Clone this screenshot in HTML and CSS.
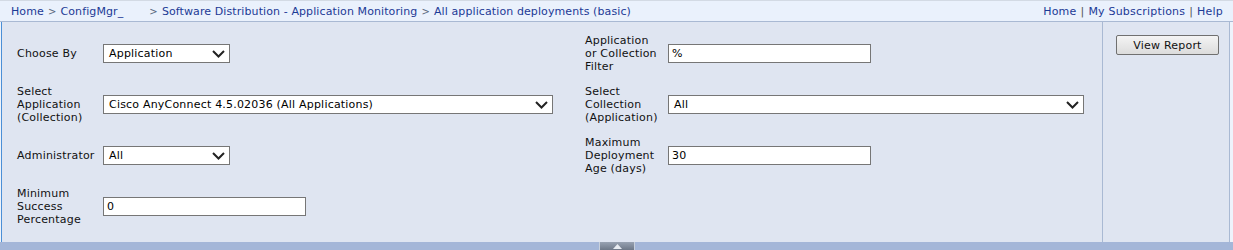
FILE: index.html
```html
<!DOCTYPE html>
<html lang="en">
<head>
    <meta charset="UTF-8">
    <title>All application deployments (basic)</title>
    <link rel="stylesheet" href="styles.css">
</head>
<body>
    <div class="header">
        <div class="crumbs">
            <a href="#">Home</a><span class="sep">&gt;</span><a href="#">ConfigMgr_</a><span class="gap"></span><span class="sep">&gt;</span><a href="#">Software Distribution - Application Monitoring</a><span class="sep">&gt;</span><a href="#">All application deployments (basic)</a>
        </div>
        <div class="links">
            <a href="#">Home</a><span class="bar">|</span><a href="#">My Subscriptions</a><span class="bar">|</span><a href="#">Help</a>
        </div>
    </div>
    <div class="main">
        <div class="form">
            <div class="label">Choose By</div>
            <div class="ctrl">
                <div class="select w-s"><span>Application</span><svg class="chev" width="13" height="8" viewBox="0 0 13 8"><path d="M1 1l5.5 5.5L12 1" fill="none" stroke="#222" stroke-width="2"/></svg></div>
            </div>
            <div class="label">Application<br>or Collection<br>Filter</div>
            <div class="ctrl"><div class="input w-m">%</div></div>

            <div class="label">Select<br>Application<br>(Collection)</div>
            <div class="ctrl">
                <div class="select w-l"><span>Cisco AnyConnect 4.5.02036 (All Applications)</span><svg class="chev" width="13" height="8" viewBox="0 0 13 8"><path d="M1 1l5.5 5.5L12 1" fill="none" stroke="#222" stroke-width="2"/></svg></div>
            </div>
            <div class="label">Select<br>Collection<br>(Application)</div>
            <div class="ctrl">
                <div class="select w-xl"><span>All</span><svg class="chev" width="13" height="8" viewBox="0 0 13 8"><path d="M1 1l5.5 5.5L12 1" fill="none" stroke="#222" stroke-width="2"/></svg></div>
            </div>

            <div class="label">Administrator</div>
            <div class="ctrl">
                <div class="select w-s"><span>All</span><svg class="chev" width="13" height="8" viewBox="0 0 13 8"><path d="M1 1l5.5 5.5L12 1" fill="none" stroke="#222" stroke-width="2"/></svg></div>
            </div>
            <div class="label">Maximum<br>Deployment<br>Age (days)</div>
            <div class="ctrl"><div class="input w-m">30</div></div>

            <div class="label">Minimum<br>Success<br>Percentage</div>
            <div class="ctrl"><div class="input w-m">0</div></div>
        </div>
        <div class="side">
            <button class="btn">View Report</button>
        </div>
    </div>
    <div class="footer">
        <div class="tab"><svg width="9" height="5" viewBox="0 0 9 5"><path d="M0 5L4.5 0L9 5Z" fill="#e8ecf2"/></svg></div>
    </div>
</body>
</html>
```

FILE: styles.css
```css
body {
    margin: 0;
    font-family: "DejaVu Sans", Verdana, sans-serif;
    font-size: 11px;
    letter-spacing: 0.2px;
    color: #000;
    background: #eef3fb;
}
a {
    color: #1c3a96;
    text-decoration: none;
}
.header {
    height: 20px;
    display: flex;
    justify-content: space-between;
    align-items: center;
    padding: 0 10px 0 11px;
    background: #eaf1fc;
    border-top: 1px solid #d3dae4;
    border-bottom: 1px solid #a9b9d3;
}
.crumbs a {
    letter-spacing: 0.1px;
}
.sep {
    color: #5a6a80;
    font-size: 10px;
    margin: 0 4px;
}
.gap {
    display: inline-block;
    width: 22px;
}
.bar {
    color: #555;
    margin: 0 4px;
}
.main {
    display: flex;
    height: 220px;
    background: #dfe5f1;
    border-left: 1px solid #4b8fd6;
    border-right: 1px solid #a9b9d3;
    margin: 0 3px 0 1px;
}
.form {
    flex: 1;
    display: grid;
    grid-template-columns: 86px 482px 83px 1fr;
    grid-auto-rows: 51px;
    align-items: center;
    padding: 6px 0 0 15px;
}
.label {
    line-height: 13px;
    color: #111;
    white-space: nowrap;
}
.ctrl {
    display: flex;
    align-items: center;
}
.select, .input {
    box-sizing: border-box;
    height: 19px;
    background: #fff;
    border: 1px solid #767676;
    display: flex;
    align-items: center;
    padding: 0 4px 0 5px;
    color: #000;
}
.select {
    justify-content: space-between;
}
.input {
    padding-left: 3px;
}
.chev {
    flex: none;
    margin-top: 1px;
}
.w-s { width: 127px; }
.w-m { width: 203px; }
.w-l { width: 450px; }
.w-xl { width: 416px; }
.side {
    width: 127px;
    border-left: 1px solid #a9b9d3;
    padding: 13px 0 0 13px;
    box-sizing: border-box;
}
.btn {
    width: 103px;
    height: 20px;
    font-family: inherit;
    font-size: 11px;
    letter-spacing: 0.2px;
    color: #111;
    background: linear-gradient(#f4f4f4, #dcdcdc);
    border: 1px solid #707070;
    border-radius: 2px;
    padding: 0;
}
.footer {
    height: 8px;
    background: #a4b6d8;
    display: flex;
    justify-content: center;
}
.tab {
    width: 34px;
    height: 8px;
    margin-left: 1px;
    background: linear-gradient(#98a2b2, #6e7888);
    border-left: 1px solid #c8d0dc;
    border-right: 1px solid #c8d0dc;
    display: flex;
    justify-content: center;
    align-items: center;
}
```
